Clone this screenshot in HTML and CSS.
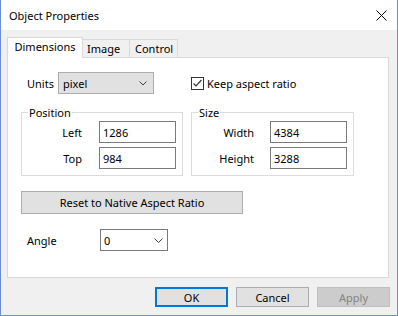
FILE: index.html
```html
<!DOCTYPE html>
<html lang="en">
<head>
    <meta charset="UTF-8">
    <title>Object Properties</title>
    <link rel="stylesheet" href="styles.css">
</head>
<body>
    <div class="window">
        <div class="titlebar">
            <span class="title">Object Properties</span>
            <svg class="close" width="11" height="11" viewBox="0 0 11 11">
                <path d="M0.5 0.5 L10.5 10.5 M10.5 0.5 L0.5 10.5" stroke="#000" stroke-width="1" fill="none"/>
            </svg>
        </div>
        <div class="client">
            <div class="tabs">
                <div class="tab active">Dimensions</div>
                <div class="tab tab-image">Image</div>
                <div class="tab tab-control">Control</div>
            </div>
            <div class="pane">
                <div class="top-row">
                    <div class="units">
                        <span class="units-label">Units</span>
                        <div class="combo combo-gray">
                            <span>pixel</span>
                            <svg width="8" height="5" viewBox="0 0 8 5"><polyline points="0.5,0.5 4,4 7.5,0.5" fill="none" stroke="#404040" stroke-width="1"/></svg>
                        </div>
                    </div>
                    <div class="check">
                        <span class="box">
                            <svg width="11" height="11" viewBox="0 0 11 11"><polyline points="1.5,5.5 4,8 9.5,2" fill="none" stroke="#333" stroke-width="1.2"/></svg>
                        </span>
                        <span>Keep aspect ratio</span>
                    </div>
                </div>
                <div class="groups">
                    <fieldset class="group">
                        <legend>Position</legend>
                        <div class="fields">
                            <label>Left</label><input type="text" value="1286">
                            <label>Top</label><input type="text" value="984">
                        </div>
                    </fieldset>
                    <fieldset class="group group-size">
                        <legend>Size</legend>
                        <div class="fields">
                            <label>Width</label><input type="text" value="4384">
                            <label>Height</label><input type="text" value="3288">
                        </div>
                    </fieldset>
                </div>
                <button class="reset">Reset to Native Aspect Ratio</button>
                <div class="angle-row">
                    <span class="angle-label">Angle</span>
                    <div class="combo combo-white">
                        <span>0</span>
                        <svg width="9" height="5" viewBox="0 0 9 5"><polyline points="0.5,0.5 4.5,4.5 8.5,0.5" fill="none" stroke="#404040" stroke-width="1"/></svg>
                    </div>
                </div>
            </div>
            <div class="buttons">
                <button class="btn btn-default">OK</button>
                <button class="btn">Cancel</button>
                <button class="btn btn-disabled">Apply</button>
            </div>
        </div>
    </div>
</body>
</html>
```

FILE: styles.css
```css
* {
    margin: 0;
    padding: 0;
    box-sizing: border-box;
}
body {
    font-family: "Noto Sans", sans-serif;
    font-size: 11px;
    line-height: 15px;
    color: #000;
    background: #fff;
}
.window {
    width: 398px;
    height: 316px;
    border: 1px solid #6b8ed6;
    border-top: none;
    display: flex;
    flex-direction: column;
}
.titlebar {
    height: 30px;
    background: #fff;
    display: flex;
    align-items: center;
    justify-content: space-between;
    padding: 0 10px 0 8px;
}
.close {
    display: block;
}
.client {
    flex: 1;
    background: #f0f0f0;
    padding: 7px 8px 0 6px;
}

/* tabs */
.tabs {
    display: flex;
    align-items: flex-end;
    height: 20px;
}
.tab {
    height: 18px;
    padding-top: 1px;
    border-top: 1px solid #d9d9d9;
    border-right: 1px solid #d9d9d9;
    background: #f0f0f0;
}
.tab.active {
    position: relative;
    z-index: 1;
    width: 76px;
    height: 21px;
    margin-bottom: -1px;
    border-left: 1px solid #d9d9d9;
    background: #fff;
    text-align: center;
}
.tab-image {
    width: 47px;
    padding-left: 4px;
}
.tab-control {
    width: 48px;
    padding-left: 5px;
}
.pane {
    height: 221px;
    background: #fff;
    border: 1px solid #d9d9d9;
    padding: 14px 0 0 13px;
}

/* first row */
.top-row, .groups {
    display: grid;
    grid-template-columns: 162px 163px;
    column-gap: 8px;
}
.top-row {
    height: 22px;
    align-items: center;
}
.units {
    display: flex;
    align-items: center;
    padding-left: 6px;
}
.units-label {
    width: 31px;
}
.combo {
    display: flex;
    align-items: center;
    justify-content: space-between;
    height: 22px;
}
.combo svg {
    display: block;
}
.combo-gray {
    width: 96px;
    background: #e1e1e1;
    border: 1px solid #adadad;
    padding: 0 6px 0 4px;
}
.combo-white {
    width: 68px;
    background: #fff;
    border: 1px solid #7a7a7a;
    padding: 0 4px 0 3px;
}
.check {
    display: flex;
    align-items: center;
    gap: 3px;
    padding-top: 1px;
}
.check .box {
    width: 13px;
    height: 13px;
    border: 1px solid #333;
    background: #fff;
}
.check .box svg {
    display: block;
}

/* group boxes */
.groups {
    margin-top: 11px;
}
.group {
    border: 1px solid #dcdcdc;
    padding: 1px 0 6px;
    min-width: 0;
}
.group legend {
    margin-left: 6px;
    padding: 0 1px;
    line-height: 15px;
}
.fields {
    display: grid;
    grid-template-columns: 60px 77px;
    column-gap: 17px;
    row-gap: 4px;
    align-items: center;
}
.group-size .fields {
    grid-template-columns: 62px 77px;
    column-gap: 16px;
}
.fields label {
    text-align: right;
}
.fields input {
    width: 77px;
    height: 22px;
    border: 1px solid #7a7a7a;
    padding: 0 3px;
    font: inherit;
    color: #000;
    outline: none;
}

/* buttons */
.reset, .btn {
    font: inherit;
    color: #000;
    background: #e1e1e1;
    border: 1px solid #adadad;
}
.reset {
    display: block;
    width: 222px;
    height: 23px;
    margin-top: 15px;
}
.angle-row {
    display: flex;
    align-items: center;
    margin-top: 15px;
    padding-left: 6px;
}
.angle-label {
    width: 73px;
}
.buttons {
    display: flex;
    justify-content: flex-end;
    gap: 8px;
    margin-top: 9px;
    margin-right: -1px;
}
.btn {
    width: 73px;
    height: 20px;
}
.btn-default {
    border: 2px solid #0078d7;
}
.btn-disabled {
    background: #cccccc;
    border-color: #bfbfbf;
    color: #838383;
}
```
